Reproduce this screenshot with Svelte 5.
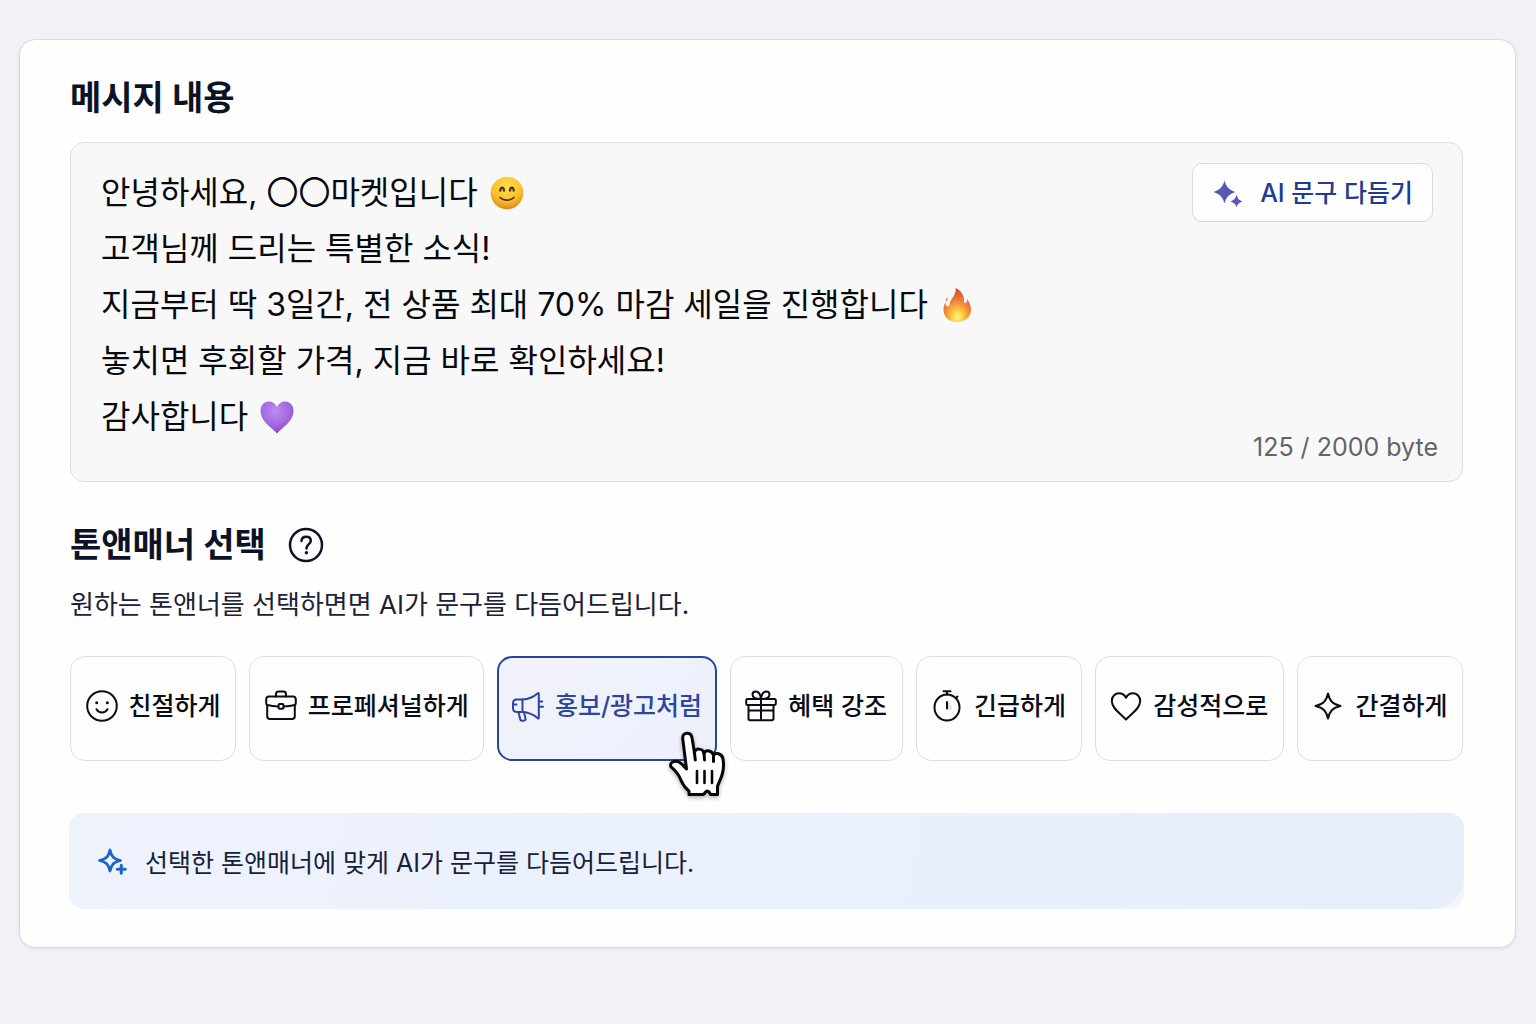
<script lang="ts">
	type Line = { text: string; emoji?: string };

	const lines: Line[] = [
		{ text: '안녕하세요, 〇〇마켓입니다 ', emoji: 'smile' },
		{ text: '고객님께 드리는 특별한 소식!' },
		{ text: '지금부터 딱 3일간, 전 상품 최대 70% 마감 세일을 진행합니다 ', emoji: 'fire' },
		{ text: '놓치면 후회할 가격, 지금 바로 확인하세요!' },
		{ text: '감사합니다 ', emoji: 'heart' }
	];

	const tones = [
		{ id: 'friendly', label: '친절하게' },
		{ id: 'professional', label: '프로페셔널하게' },
		{ id: 'promo', label: '홍보/광고처럼' },
		{ id: 'benefit', label: '혜택 강조' },
		{ id: 'urgent', label: '긴급하게' },
		{ id: 'emotional', label: '감성적으로' },
		{ id: 'concise', label: '간결하게' }
	];

	let message = $state(lines.map((line) => line.text).join('\n'));
	let selected = $state('promo');
</script>

<main>
	<section class="card">
		<h2><label for="message">메시지 내용</label></h2>

		<div class="editor">
			<textarea id="message" rows="5" spellcheck="false" bind:value={message}></textarea>

			<!-- Emoji layer, laid over the end of each line -->
			<div class="emoji-layer" aria-hidden="true">
				{#each lines as line}
					<div class="emoji-line">
						{#if line.emoji}
							<span class="spacer">{line.text}</span>
						{/if}
						{#if line.emoji === 'smile'}
							<svg class="emoji" viewBox="0 0 34 34">
								<defs>
									<radialGradient id="face" cx="0.5" cy="0.3" r="0.7">
										<stop offset="0" stop-color="#ffe04c" />
										<stop offset="0.65" stop-color="#f8bf2b" />
										<stop offset="1" stop-color="#dd861c" />
									</radialGradient>
								</defs>
								<circle cx="17" cy="17" r="16.3" fill="url(#face)" />
								<path d="M10.3 14.600c.3-4 3.400-4 3.700 0M20 14.600c.3-4 3.400-4 3.700 0" fill="none" stroke="#4f340c" stroke-width="2.200" stroke-linecap="round" />
								<path d="M10 21.500c3.500 3.500 10.500 3.500 14 0" fill="none" stroke="#4f340c" stroke-width="1.700" stroke-linecap="round" />
							</svg>
						{:else if line.emoji === 'fire'}
							<svg class="emoji" viewBox="0 0 34 34">
								<defs>
									<radialGradient id="flame" cx="0.5" cy="0.86" r="0.8">
										<stop offset="0" stop-color="#fff27a" />
										<stop offset="0.3" stop-color="#fdc23c" />
										<stop offset="0.62" stop-color="#f08038" />
										<stop offset="1" stop-color="#d84e2e" />
									</radialGradient>
								</defs>
								<path d="M15.500 0C21 2.500 24 7 24 12.500c0 1.500.3 2.500 1 2.500 1.500 0 2.300-1.500 2.200-4C30 15 31 18.500 31 22c0 7-6 12-14 12S3.500 29 3.500 22c0-3 .8-5.500 2-7.500.3 2.500 1 4 2.200 4 1.500 0 1.800-2 2.500-4.500C11.500 9.500 16.500 7 15.500 0Z" fill="url(#flame)" />
								<path d="M17.500 21c1 2.500-4 4-4 7 0 2.500 2 4 4.500 4s4.500-1.500 4.500-4c0-1.500-.8-2.800-1.500-3.500-.3 1-.8 1.500-1.500 1.500-1 0 0-3-2-5Z" fill="#fff07a" opacity="0.4" />
								<path d="M7.500 9.500c.1 1.200-.2 2.400-1.300 3.700-.8-1.500-.2-2.700 1.300-3.700Z" fill="#e2552f" />
							</svg>
						{:else if line.emoji === 'heart'}
							<svg class="emoji" viewBox="0 0 34 34">
								<defs>
									<radialGradient id="heart" cx="0.45" cy="0.3" r="0.7">
										<stop offset="0" stop-color="#bd8cf0" />
										<stop offset="0.65" stop-color="#a066df" />
										<stop offset="1" stop-color="#8444c8" />
									</radialGradient>
								</defs>
								<path d="M17 33.500C12 27.500.5 21.500.5 11 .5 5.500 4 1.500 8.800 1.500c3.700 0 6.700 2 8.200 5.500 1.500-3.500 4.500-5.500 8.200-5.500 4.800 0 8.300 4 8.300 9.500C33.500 21.500 22 27.500 17 33.500Z" fill="url(#heart)" />
							</svg>
						{/if}
					</div>
				{/each}
			</div>

			<button class="polish" type="button">
				<svg viewBox="0 0 32 32" width="32" height="32" aria-hidden="true">
					<path d="M12.500 3.500c1.800 6.500 4.200 9 10.800 11.500-6.600 2.500-9 5-10.800 11.500C10.700 20 8.300 17.500 1.500 15c6.800-2.500 9.200-5 11-11.500ZM24.500 17.500c1 4 2.300 5.500 6 7-3.700 1.500-5 2.500-6 6-1-3.500-2.300-4.500-6-6 3.700-1.500 5-3 6-7Z" fill="#5a57b5" />
				</svg>
				<span>AI 문구 다듬기</span>
			</button>

			<span class="count">125 / 2000 byte</span>
		</div>

		<div class="tone-head">
			<h2 id="tone-title">톤앤매너 선택</h2>
			<button class="help" type="button" aria-label="도움말">
				<svg viewBox="0 0 36 36" width="36" height="36" fill="none" stroke="currentColor" stroke-linecap="round" stroke-linejoin="round">
					<circle cx="18" cy="18" r="16" stroke-width="2.500" />
					<path d="M13.500 14c.2-2.700 2-4.200 4.700-4.200 2.800 0 4.600 1.600 4.600 4 0 3.300-4.300 3.600-4.300 7.600" stroke-width="2.500" />
					<circle cx="18.400" cy="25.800" r="1.700" fill="currentColor" stroke="none" />
				</svg>
			</button>
		</div>
		<p class="desc">원하는 톤앤너를 선택하면면 AI가 문구를 다듬어드립니다.</p>

		<div class="tones" role="group" aria-labelledby="tone-title">
			{#each tones as tone (tone.id)}
				<button
					class="tone"
					class:active={selected === tone.id}
					type="button"
					aria-pressed={selected === tone.id}
					onclick={() => (selected = tone.id)}
				>
					<svg class="icon" viewBox="0 0 32 32" aria-hidden="true">
						{#if tone.id === 'friendly'}
							<circle cx="16" cy="16" r="14.800" />
							<path d="M10.500 19.200c2.500 4.300 8.500 4.300 11 0" />
							<circle class="dot" cx="10.700" cy="12.700" r="1.500" />
							<circle class="dot" cx="21.300" cy="12.700" r="1.500" />
						{:else if tone.id === 'professional'}
							<path d="M11 6.500V4.200C11 2.500 12 1.500 13.500 1.500h5c1.500 0 2.500 1 2.500 2.700v2.300" />
							<path d="M13.500 16.500C9 16.300 5 15.700 2.500 15 1.600 14.700 1.200 14.200 1.200 13.300V9.300c0-1.800 1-2.800 2.800-2.800h24c1.800 0 2.800 1 2.800 2.800v4c0 .9-.4 1.400-1.300 1.700-2.500.7-6.500 1.300-11 1.500" />
							<path d="M2.200 15v11.200c0 1.800 1 2.800 2.800 2.800h22c1.800 0 2.800-1 2.800-2.800V15" />
							<rect x="13.500" y="14" width="5" height="4.800" rx="1.200" />
						{:else if tone.id === 'promo'}
							<path d="M10.500 9.500C16 9.300 21.500 7 25.800 3.300c.6-.4 1-.2 1 .5v24c0 .8-.5 1-1 .5-4.300-3.800-9.800-6-15.300-6.300" />
							<path d="M10.500 9.500H4.700c-2.300 0-3.700 1.400-3.700 3.700v4.600C1 20.500 2.400 22 4.700 22h5.800Z" />
							<path d="m6.500 22 1.700 7.300c.3 1.300 1 1.700 2.200 1.500l2-.3c1-.2 1.400-.9 1.100-1.900L12 22.300M27.500 11.500h2.700M27.500 16.800h3.500M1.500 14.500h3" />
						{:else if tone.id === 'benefit'}
							<rect x="1.200" y="9" width="29.600" height="6" rx="1.300" />
							<path d="M3.500 15v13.500c0 1 .7 1.700 1.700 1.700h21.600c1 0 1.700-.7 1.700-1.700V15M16 9v21M3.500 20.500h25" />
							<path d="M16 9C10.500 9 7.500 7.300 7.500 4.500c0-1.700 1.300-3 3.200-3C13.500 1.500 15.500 4.500 16 9ZM16 9c5.500 0 8.500-1.700 8.500-4.500 0-1.700-1.300-3-3.200-3C18.500 1.500 16.500 4.500 16 9Z" />
						{:else if tone.id === 'urgent'}
							<path class="shade" d="M16.500 12v9l4-1.500c1-3.500-1-6.500-4-7.500Z" />
							<ellipse cx="16" cy="17.500" rx="12.500" ry="13" />
							<path d="M12.500 1.200h7M16 1.200v3.500M25.300 7.800l1.200-1.300M16 12v6.500" />
						{:else if tone.id === 'emotional'}
							<path d="M16 29.500C11 24 1.800 18.800 1.800 11 1.800 6.500 5 3.300 9 3.300c3 0 5.500 1.500 7 4.500 1.500-3 4-4.500 7-4.500 4 0 7.200 3.200 7.200 7.700 0 7.800-9.200 13-14.200 18.500Z" />
						{:else}
							<path d="M16 3.500c1.800 7.700 4.800 10.700 12.500 12.500-7.700 1.800-10.700 4.800-12.500 12.500C14.200 20.800 11.200 17.800 3.500 16 11.200 14.200 14.200 11.200 16 3.500Z" />
						{/if}
					</svg>
					<span>{tone.label}</span>

					{#if selected === tone.id}
						<svg class="cursor" viewBox="0 0 60 68" width="60" height="68" aria-hidden="true">
							<path d="M21 63.500v-3.300c-3.500-3-6.500-7-8.500-12C10 42 6.500 39 3.700 36.500c-1.700-1.500-1.500-4 .5-5.200 3.300-2 7.300-1.300 11.800 4.200L18.500 38 14.800 8.200C14.300 4.500 16 2.500 18.800 2.200c2.900-.3 4.800 1.400 5.300 5L26.500 22c.3-5.500 8.500-5 9.500.5 1.500-4.500 8.700-3 9.500 2 2-3.500 8.500-2.200 9.500 3.500.7 4 .5 11-1 16-1.300 4.500-3.500 8-4.500 11.500v8h-7c-1-2.500-3-4.500-4.500-3-1 1-1.500 2-2.500 3Z" fill="#fff" stroke="#050608" stroke-width="3" stroke-linejoin="round" />
							<path d="M26.300 21 27.300 29M36 22l.5 7M45.500 24v6.500" stroke="#050608" stroke-width="3" stroke-linecap="round" />
							<path d="M29 40v12M36.500 40v12M44 40v12" stroke="#050608" stroke-width="2.600" stroke-linecap="round" />
						</svg>
					{/if}
				</button>
			{/each}
		</div>

		<div class="notice">
			<svg viewBox="0 0 32 32" width="32" height="32" fill="none" stroke="#1768c6" stroke-linejoin="round" stroke-linecap="round" aria-hidden="true">
				<path d="M13 5c1.300 6.500 4 9.200 10.500 10.500C17 16.800 14.300 19.500 13 26c-1.300-6.500-4-9.200-10.500-10.500C9 14.200 11.700 11.500 13 5Z" stroke-width="2.800" />
				<path d="M24.300 20.200v8M20.300 24.200h8" stroke-width="3" />
			</svg>
			<p>선택한 톤앤매너에 맞게 AI가 문구를 다듬어드립니다.</p>
		</div>
	</section>
</main>

<style>
	:global(body) {
		background: #f1f2f7;
	}

	main {
		padding: 39px 20px 76px 19px;
		font-family: Inter, 'Noto Sans CJK KR', sans-serif;
		color: #0c1327;
	}

	button,
	textarea {
		font-family: inherit;
		margin: 0;
	}

	.card {
		padding: 33px 52px 38px 50px;
		background: #fefefe;
		border: 1px solid #d9dbe4;
		border-radius: 16px;
		box-shadow: 0 1px 3px rgba(30, 35, 70, 0.1);
	}

	h2 {
		margin: 0;
		font-size: 34px;
		line-height: 50px;
		font-weight: 700;
	}

	.editor {
		position: relative;
		margin-top: 19px;
		background: #f8f8f9;
		border: 1px solid #dcdde4;
		border-radius: 14px;
	}

	textarea,
	.emoji-layer {
		box-sizing: border-box;
		width: 100%;
		padding: 22px 30px 36px;
		font-size: 32px;
		line-height: 56px;
	}

	textarea {
		display: block;
		border: 0;
		border-radius: 14px;
		background: transparent;
		color: #08090c;
		resize: none;
		overflow: hidden;
		outline: none;
	}

	.emoji-layer {
		position: absolute;
		inset: 0;
		pointer-events: none;
	}

	.emoji-line {
		display: flex;
		align-items: center;
		height: 56px;
		white-space: pre;
	}

	.spacer {
		visibility: hidden;
	}

	.emoji {
		width: 34px;
		height: 34px;
		margin-left: 3px;
	}

	.polish {
		position: absolute;
		top: 20px;
		right: 29px;
		display: flex;
		align-items: center;
		gap: 16px;
		height: 59px;
		padding: 0 19px;
		background: #fefefe;
		border: 1px solid #d8d9e3;
		border-radius: 10px;
		color: #243a8c;
		font-size: 25px;
		line-height: 32px;
		font-weight: 500;
		cursor: pointer;
	}

	.count {
		position: absolute;
		right: 24px;
		bottom: 16px;
		font-size: 25px;
		line-height: 36px;
		color: #62646b;
	}

	.tone-head {
		display: flex;
		align-items: center;
		gap: 22px;
		margin-top: 38px;
	}

	.help {
		display: flex;
		padding: 0;
		border: 0;
		background: none;
		color: #0c1327;
		cursor: pointer;
	}

	.desc {
		margin: 17px 0 0;
		font-size: 26px;
		line-height: 36px;
		color: #1b2138;
	}

	.tones {
		display: flex;
		gap: 13px;
		margin-top: 33px;
	}

	.tone {
		position: relative;
		display: flex;
		flex: 1 1 auto;
		align-items: center;
		justify-content: center;
		gap: 11px;
		height: 105px;
		padding: 0 10px 6px;
		background: #fefefe;
		border: 1px solid #dcdce7;
		border-radius: 15px;
		color: #0a0d16;
		font-size: 25px;
		line-height: 32px;
		font-weight: 500;
		white-space: nowrap;
		cursor: pointer;
	}

	.tone.active {
		padding: 0 8px 6px;
		background: linear-gradient(135deg, #f1f2fb, #edf0fb);
		border: 2px solid #2647a0;
		color: #2c459f;
	}

	.icon {
		flex: none;
		width: 32px;
		height: 32px;
		fill: none;
		stroke: currentColor;
		stroke-width: 2;
		stroke-linecap: round;
		stroke-linejoin: round;
	}

	.icon .dot {
		fill: currentColor;
		stroke: none;
	}

	.icon .shade {
		fill: #dfe4ea;
		stroke: none;
	}

	.cursor {
		position: absolute;
		right: -13px;
		bottom: -40px;
		z-index: 1;
		fill: none;
		filter: drop-shadow(0 2px 2px rgba(0, 0, 0, 0.3));
		pointer-events: none;
	}

	.notice {
		position: relative;
		display: flex;
		align-items: center;
		gap: 16px;
		height: 96px;
		margin: 52px -1px 0;
		padding: 0 28px;
		background: #f1f5fe;
		border-radius: 15px;
		color: #16203c;
		font-size: 25px;
	}

	.notice::before {
		content: '';
		position: absolute;
		inset: 0;
		background: linear-gradient(100deg, #eef2fb, #eaf1fd 50%, #e8edfb);
		border-radius: 15px 15px 32px 15px;
	}

	.notice svg,
	.notice p {
		position: relative;
		margin: 0;
	}
</style>
